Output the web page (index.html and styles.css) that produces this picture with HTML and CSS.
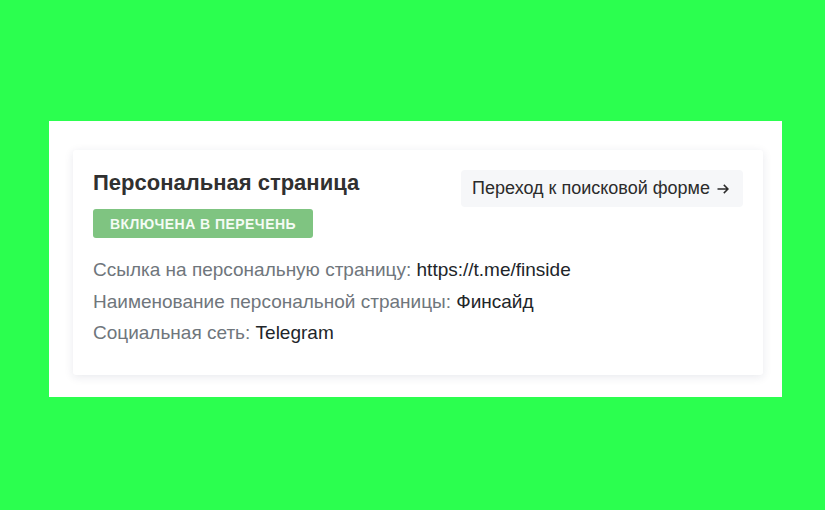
FILE: index.html
```html
<!DOCTYPE html>
<html lang="ru">
<head>
<meta charset="utf-8">
<link rel="stylesheet" href="styles.css">
</head>
<body>
<div class="panel">
  <div class="card">
    <div class="head">
      <div class="left">
        <h2 class="title">Персональная страница</h2>
        <span class="badge">Включена в перечень</span>
      </div>
      <a class="btn">Переход к поисковой форме<svg class="arrow" width="12" height="10" viewBox="0 0 12 10"><path d="M0.5 5H11M6.8 0.9L11 5L6.8 9.1" fill="none" stroke="#2b2b2b" stroke-width="1.5"/></svg></a>
    </div>
    <div class="info">
      <div class="row"><span class="label">Ссылка на персональную страницу:</span> <span class="val">https://t.me/finside</span></div>
      <div class="row"><span class="label">Наименование персональной страницы:</span> <span class="val">Финсайд</span></div>
      <div class="row"><span class="label">Социальная сеть:</span> <span class="val">Telegram</span></div>
    </div>
  </div>
</div>
</body>
</html>
```

FILE: styles.css
```css
html, body {
  margin: 0;
  padding: 0;
  background: #2bff4f;
  width: 825px;
  height: 510px;
  overflow: hidden;
  font-family: "Liberation Sans", Arial, sans-serif;
}
.panel {
  box-sizing: border-box;
  margin: 121px 0 0 49px;
  width: 733px;
  height: 276px;
  background: #ffffff;
  padding: 29px 19px 0 24px;
}
.card {
  box-sizing: border-box;
  width: 690px;
  height: 225px;
  background: #fff;
  box-shadow: 0 2px 10px rgba(30, 40, 80, 0.10);
  border-radius: 3px;
  padding: 20px 20px;
}
.head {
  display: flex;
  justify-content: space-between;
  align-items: flex-start;
}
.left {
  display: flex;
  flex-direction: column;
  align-items: flex-start;
}
.title {
  margin: 0;
  font-size: 22px;
  line-height: 25px;
  font-weight: bold;
  color: #303030;
}
.badge {
  margin-top: 14px;
  display: inline-flex;
  align-items: center;
  justify-content: center;
  box-sizing: border-box;
  width: 220px;
  height: 29px;
  border-radius: 3px;
  background: #7fc481;
  color: #f4fbf4;
  font-size: 14px;
  font-weight: bold;
  text-transform: uppercase;
  letter-spacing: 0.45px;
}
.btn {
  display: flex;
  align-items: center;
  gap: 7px;
  height: 37px;
  padding: 0 14px 0 11px;
  background: #f6f7f9;
  border-radius: 4px;
  color: #2b2b2b;
  font-size: 18px;
}
.arrow {
  display: block;
  margin-top: 1px;
}
.info {
  margin-top: 16px;
}
.row {
  font-size: 19px;
  line-height: 31.5px;
  color: #212529;
}
.label {
  color: #6f767c;
}
```
